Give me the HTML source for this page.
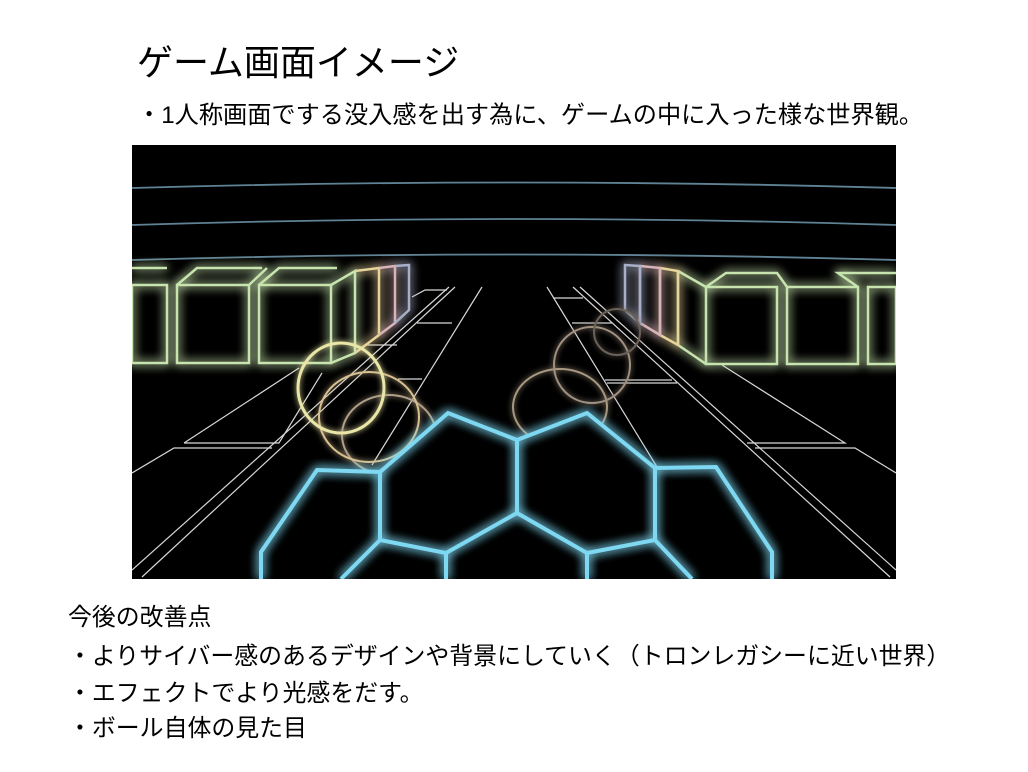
<!DOCTYPE html>
<html><head><meta charset="utf-8"><style>
html,body{margin:0;padding:0;background:#fff;}
body{width:1028px;height:772px;position:relative;overflow:hidden;font-family:"Liberation Sans","Noto Sans CJK JP",sans-serif;color:#000;}
.t{position:absolute;white-space:nowrap;line-height:1;}
</style></head><body>
<div class="t" style="left:137px;top:45px;font-size:36px;">ゲーム画面イメージ</div>
<div class="t" style="left:137px;top:104px;font-size:24.2px;">・1人称画面でする没入感を出す為に、ゲームの中に入った様な世界観。</div>
<svg style="position:absolute;left:132px;top:145px" width="764" height="434" viewBox="0 0 764 434">
<defs>
<filter id="g" x="-20%" y="-20%" width="140%" height="140%"><feGaussianBlur stdDeviation="5" result="b"/><feMerge><feMergeNode in="b"/><feMergeNode in="b"/><feMergeNode in="SourceGraphic"/></feMerge></filter>
<filter id="g2" x="-20%" y="-20%" width="140%" height="140%"><feGaussianBlur stdDeviation="3" result="b"/><feMerge><feMergeNode in="b"/><feMergeNode in="SourceGraphic"/></feMerge></filter>
</defs>
<rect width="764" height="434" fill="#000"/>
<g fill="none" stroke="#5f8294" stroke-width="1.8">
<path d="M0,43 Q382,32 764,43"/>
<path d="M0,80 Q382,68 764,80"/>
<path d="M0,115 Q382,104 764,115"/>
</g>
<g fill="none" stroke="#d8d8d8" stroke-width="1.2">
<path d="M350,142 L240,320"/>
<path d="M323,142 L10,432"/><path d="M317,142 L0,425"/>
<path d="M52,298 L147,298 L190,228 M52,298 L167,223"/>
<path d="M0,328 L42,303 L140,303"/>
<path d="M280,152 L293,145 L315,145 M285,178 L320,178 M233,200 L265,200 M266,234 L290,234"/>
<path d="M415,142 L525,322"/>
<path d="M441,142 L758,432"/><path d="M448,142 L764,425"/>
<path d="M590,220 L713,298 L615,298"/>
<path d="M623,303 L723,303 L764,328"/>
<path d="M421,153 L451,153 M440,178 L480,178 M473,235 L540,235 M475,238 L545,238"/>
</g>
<g fill="none" stroke-width="2.5" filter="url(#g)">
<g stroke="#c8e4ae">
<rect x="0" y="140" width="35" height="78"/><rect x="45" y="140" width="72" height="78"/><rect x="127" y="140" width="72" height="78"/>
<path d="M0,123 L35,123 M45,140 L65,123 L130,123 M117,140 L135,123 M127,140 L147,123 L205,123 M199,140 L223,126 L223,208 L199,218"/>
<rect x="574" y="142" width="71" height="77"/><rect x="655" y="142" width="71" height="77"/><rect x="736" y="142" width="28" height="77"/>
<path d="M546,126 L574,142 M546,126 L546,200 L574,219 M574,142 L594,128 L645,128 L655,142 M726,142 L706,128 L764,128"/>
</g>
<g stroke="#e8d49a"><path d="M223,126 L247,123 L247,190 L223,208"/><path d="M528,123 L546,126 L546,200 L528,190 Z"/></g>
<g stroke="#d8b4b8"><path d="M247,123 L263,121 L263,178 L247,190"/><path d="M508,121 L528,123 L528,190 L508,178 Z"/></g>
<g stroke="#a8b0c8"><path d="M263,121 L277,120 L277,165 L263,178"/><path d="M493,120 L508,121 L508,178 L493,165 Z"/></g>
</g>
<g fill="none" stroke-width="2" filter="url(#g2)">
<ellipse cx="257" cy="290" rx="47" ry="40" stroke="#b0a088"/>
<ellipse cx="237" cy="272" rx="50" ry="45" stroke="#d8c090"/>
<ellipse cx="209" cy="243" rx="43" ry="45" stroke="#eae6a8" stroke-width="3"/>
<ellipse cx="428" cy="262" rx="47" ry="38" stroke="#a89880"/>
<ellipse cx="460" cy="220" rx="38" ry="38" stroke="#a09080"/>
<ellipse cx="485" cy="187" rx="23" ry="23" stroke="#6a6058"/>
</g>
<path d="M129,434 L129,407 L185,325 L248,327 L316,268 L385,295 L455,268 L523,323 L584,322 L640,407 L640,434 Z" fill="#000"/>
<g fill="none" stroke="#7ed8f2" stroke-width="4" filter="url(#g)">
<path d="M129,434 L129,407 L185,325 L248,327 L248,395 L314,408 L314,434"/>
<path d="M248,327 L316,268 L385,295 L455,268 L523,323 L584,322 L640,407 L640,434"/>
<path d="M385,295 L385,368 L314,408 M385,368 L455,408 L455,434 M455,408 L523,395 L523,323"/>
<path d="M248,395 L209,434 M523,395 L560,434"/>
</g>
</svg>
<div class="t" style="left:68px;top:606px;font-size:23.9px;">今後の改善点</div>
<div class="t" style="left:68px;top:645px;font-size:23.9px;">・よりサイバー感のあるデザインや背景にしていく（トロンレガシーに近い世界）</div>
<div class="t" style="left:68px;top:682px;font-size:23.9px;">・エフェクトでより光感をだす。</div>
<div class="t" style="left:68px;top:717px;font-size:23.9px;">・ボール自体の見た目</div>
</body></html>
